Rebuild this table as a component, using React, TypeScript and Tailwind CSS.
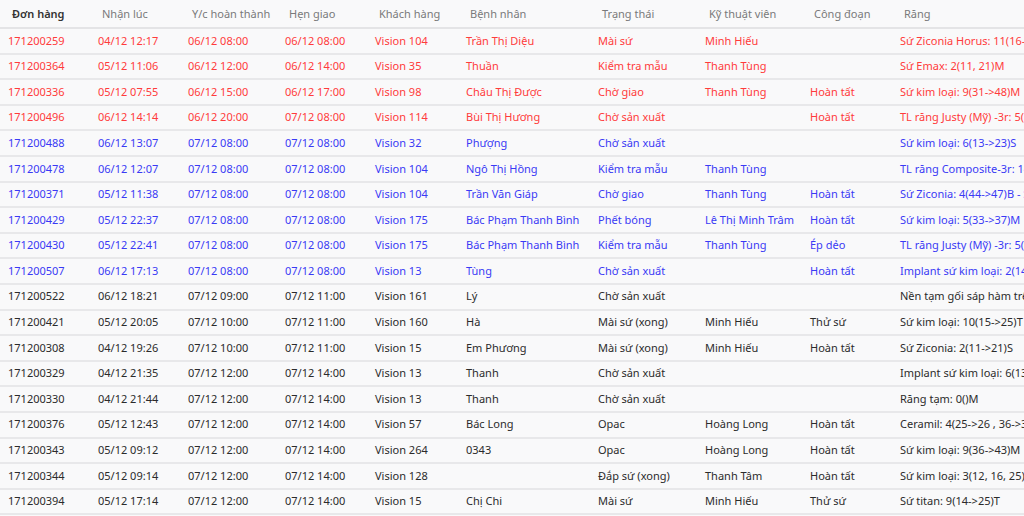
type Tone = 'red' | 'blue' | 'dark'

interface Order {
  id: string
  received: string
  due: string
  delivery: string
  customer: string
  patient: string
  status: string
  tech: string
  stage: string
  teeth: string
  tone: Tone
}

// ─── Dữ liệu ──────────────────────────────────────────────────────────────────

const orders: Order[] = [
  { id: '171200259', received: '04/12 12:17', due: '06/12 08:00', delivery: '06/12 08:00', customer: 'Vision 104', patient: 'Trần Thị Diệu', status: 'Mài sứ', tech: 'Minh Hiếu', stage: '', teeth: 'Sứ Ziconia Horus: 11(16->26)M', tone: 'red' },
  { id: '171200364', received: '05/12 11:06', due: '06/12 12:00', delivery: '06/12 14:00', customer: 'Vision 35', patient: 'Thuần', status: 'Kiểm tra mẫu', tech: 'Thanh Tùng', stage: '', teeth: 'Sứ Emax: 2(11, 21)M', tone: 'red' },
  { id: '171200336', received: '05/12 07:55', due: '06/12 15:00', delivery: '06/12 17:00', customer: 'Vision 98', patient: 'Châu Thị Được', status: 'Chờ giao', tech: 'Thanh Tùng', stage: 'Hoàn tất', teeth: 'Sứ kim loại: 9(31->48)M', tone: 'red' },
  { id: '171200496', received: '06/12 14:14', due: '06/12 20:00', delivery: '07/12 08:00', customer: 'Vision 114', patient: 'Bùi Thị Hương', status: 'Chờ sản xuất', tech: '', stage: 'Hoàn tất', teeth: 'TL răng Justy (Mỹ) -3r: 5(15->25)', tone: 'red' },
  { id: '171200488', received: '06/12 13:07', due: '07/12 08:00', delivery: '07/12 08:00', customer: 'Vision 32', patient: 'Phượng', status: 'Chờ sản xuất', tech: '', stage: '', teeth: 'Sứ kim loại: 6(13->23)S', tone: 'blue' },
  { id: '171200478', received: '06/12 12:07', due: '07/12 08:00', delivery: '07/12 08:00', customer: 'Vision 104', patient: 'Ngô Thị Hồng', status: 'Kiểm tra mẫu', tech: 'Thanh Tùng', stage: '', teeth: 'TL răng Composite-3r: 14(17->27)', tone: 'blue' },
  { id: '171200371', received: '05/12 11:38', due: '07/12 08:00', delivery: '07/12 08:00', customer: 'Vision 104', patient: 'Trần Văn Giáp', status: 'Chờ giao', tech: 'Thanh Tùng', stage: 'Hoàn tất', teeth: 'Sứ Ziconia: 4(44->47)B - Sứ', tone: 'blue' },
  { id: '171200429', received: '05/12 22:37', due: '07/12 08:00', delivery: '07/12 08:00', customer: 'Vision 175', patient: 'Bác Phạm Thanh Bình', status: 'Phết bóng', tech: 'Lê Thị Minh Trâm', stage: 'Hoàn tất', teeth: 'Sứ kim loại: 5(33->37)M', tone: 'blue' },
  { id: '171200430', received: '05/12 22:41', due: '07/12 08:00', delivery: '07/12 08:00', customer: 'Vision 175', patient: 'Bác Phạm Thanh Bình', status: 'Kiểm tra mẫu', tech: 'Thanh Tùng', stage: 'Ép dẻo', teeth: 'TL răng Justy (Mỹ) -3r: 5(15->25)', tone: 'blue' },
  { id: '171200507', received: '06/12 17:13', due: '07/12 08:00', delivery: '07/12 08:00', customer: 'Vision 13', patient: 'Tùng', status: 'Chờ sản xuất', tech: '', stage: 'Hoàn tất', teeth: 'Implant sứ kim loại: 2(14, 15)', tone: 'blue' },
  { id: '171200522', received: '06/12 18:21', due: '07/12 09:00', delivery: '07/12 11:00', customer: 'Vision 161', patient: 'Lý', status: 'Chờ sản xuất', tech: '', stage: '', teeth: 'Nền tạm gối sáp hàm trên', tone: 'dark' },
  { id: '171200421', received: '05/12 20:05', due: '07/12 10:00', delivery: '07/12 11:00', customer: 'Vision 160', patient: 'Hà', status: 'Mài sứ (xong)', tech: 'Minh Hiếu', stage: 'Thử sứ', teeth: 'Sứ kim loại: 10(15->25)T', tone: 'dark' },
  { id: '171200308', received: '04/12 19:26', due: '07/12 10:00', delivery: '07/12 11:00', customer: 'Vision 15', patient: 'Em Phương', status: 'Mài sứ (xong)', tech: 'Minh Hiếu', stage: 'Hoàn tất', teeth: 'Sứ Ziconia: 2(11->21)S', tone: 'dark' },
  { id: '171200329', received: '04/12 21:35', due: '07/12 12:00', delivery: '07/12 14:00', customer: 'Vision 13', patient: 'Thanh', status: 'Chờ sản xuất', tech: '', stage: '', teeth: 'Implant sứ kim loại: 6(13->23)', tone: 'dark' },
  { id: '171200330', received: '04/12 21:44', due: '07/12 12:00', delivery: '07/12 14:00', customer: 'Vision 13', patient: 'Thanh', status: 'Chờ sản xuất', tech: '', stage: '', teeth: 'Răng tạm: 0()M', tone: 'dark' },
  { id: '171200376', received: '05/12 12:43', due: '07/12 12:00', delivery: '07/12 14:00', customer: 'Vision 57', patient: 'Bác Long', status: 'Opac', tech: 'Hoàng Long', stage: 'Hoàn tất', teeth: 'Ceramil: 4(25->26 , 36->37)', tone: 'dark' },
  { id: '171200343', received: '05/12 09:12', due: '07/12 12:00', delivery: '07/12 14:00', customer: 'Vision 264', patient: '0343', status: 'Opac', tech: 'Hoàng Long', stage: 'Hoàn tất', teeth: 'Sứ kim loại: 9(36->43)M', tone: 'dark' },
  { id: '171200344', received: '05/12 09:14', due: '07/12 12:00', delivery: '07/12 14:00', customer: 'Vision 128', patient: '', status: 'Đắp sứ (xong)', tech: 'Thanh Tâm', stage: 'Hoàn tất', teeth: 'Sứ kim loại: 3(12, 16, 25)M', tone: 'dark' },
  { id: '171200394', received: '05/12 17:14', due: '07/12 12:00', delivery: '07/12 14:00', customer: 'Vision 15', patient: 'Chị Chi', status: 'Mài sứ', tech: 'Minh Hiếu', stage: 'Thử sứ', teeth: 'Sứ titan: 9(14->25)T', tone: 'dark' },
]

const headers = [
  'Đơn hàng',
  'Nhận lúc',
  'Y/c hoàn thành',
  'Hẹn giao',
  'Khách hàng',
  'Bệnh nhân',
  'Trạng thái',
  'Kỹ thuật viên',
  'Công đoạn',
  'Răng',
]

const toneClass: Record<Tone, string> = {
  red: 'text-[#ff3b3b]',
  blue: 'text-[#3a3af5]',
  dark: 'text-[#2b2b2b]',
}

const grid =
  'grid grid-cols-[90px_90px_97px_90px_91px_132px_107px_105px_90px_1fr]'

// ─── Componente ───────────────────────────────────────────────────────────────

export default function App() {
  return (
    <div
      className="w-[1024px] h-[516px] overflow-hidden bg-[#f9f9fa] pt-px text-[11px]"
      style={{ fontFamily: '"Noto Sans", "Open Sans", sans-serif' }}
    >
      <div className={`${grid} h-[28px] items-center border-b-2 border-[#e4e4e6]`}>
        {headers.map((h, i) => (
          <div
            key={h}
            className={`pl-3 whitespace-nowrap ${
              i === 0 ? 'text-[#333] font-semibold' : 'text-[#7a7a7a]'
            }`}
          >
            {h}
          </div>
        ))}
      </div>

      {orders.map((o) => (
        <div
          key={o.id}
          className={`${grid} h-[25.6px] items-center border-b-2 border-[#e8e8ea] ${toneClass[o.tone]}`}
        >
          <div className="pl-2 whitespace-nowrap">{o.id}</div>
          <div className="pl-2 whitespace-nowrap">{o.received}</div>
          <div className="pl-2 whitespace-nowrap">{o.due}</div>
          <div className="pl-2 whitespace-nowrap">{o.delivery}</div>
          <div className="pl-2 whitespace-nowrap">{o.customer}</div>
          <div className="pl-2 whitespace-nowrap">{o.patient}</div>
          <div className="pl-2 whitespace-nowrap">{o.status}</div>
          <div className="pl-2 whitespace-nowrap">{o.tech}</div>
          <div className="pl-2 whitespace-nowrap">{o.stage}</div>
          <div className="pl-2 whitespace-nowrap overflow-hidden">{o.teeth}</div>
        </div>
      ))}
    </div>
  )
}
